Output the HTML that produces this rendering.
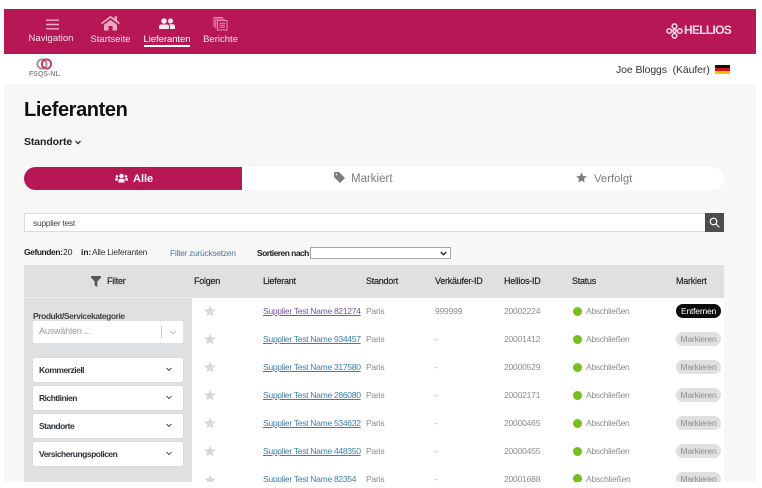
<!DOCTYPE html>
<html><head><meta charset="utf-8">
<style>
*{box-sizing:border-box}
html,body{margin:0;padding:0;background:#fff;width:762px;height:488px;overflow:hidden;font-family:"Liberation Sans",sans-serif}
#p{position:relative;width:762px;height:488px;overflow:hidden;background:#fff}
.a{position:absolute;white-space:nowrap}
.h{font-size:9px;color:#222;top:276px;letter-spacing:-.25px;-webkit-text-stroke:.15px #222}
.g{font-size:8.5px;color:#8c8c8c;letter-spacing:-.2px}
.l{font-size:8.6px;color:#3f7fb0;text-decoration:underline;letter-spacing:-.33px}
.dot{position:absolute;width:9px;height:9px;border-radius:50%;background:#78bd1f;left:573px}
.tag{position:absolute;left:676px;width:45px;height:14px;border-radius:7px;background:#dfe0e2;color:#8c8c8c;font-size:8.5px;letter-spacing:-.2px;text-align:center;line-height:14px}
.box{position:absolute;left:33px;width:150px;height:24px;background:#fff;border-radius:2px;box-shadow:0 0 1px #bbb;font-size:8.5px;font-weight:bold;letter-spacing:-.5px;color:#2e3338;line-height:25px;padding-left:6px}
.nl{font-size:9.5px;color:#f6e3ea;position:absolute;white-space:nowrap;transform:translateX(-50%)}
</style></head><body><div id="p">
<div class="a" style="left:4px;top:84px;width:752px;height:398px;background:#f7f7f7"></div>
<div class="a" style="left:4px;top:9px;width:752px;height:45px;background:#b81755"></div>

<svg class="a" style="left:46px;top:19px" width="13" height="11" viewBox="0 0 13 11"><path d="M0 1.200H13M0 5.500H13M0 9.800H13" stroke="#eba9c2" stroke-width="1.400"/></svg>
<div class="nl" style="left:51px;top:33px">Navigation</div>

<svg class="a" style="left:101px;top:15px" width="19" height="16" viewBox="0 0 19 16"><path fill="#eba9c2" d="M0 8L9.500 .8 13.500 3.600V1.400H16V5.500L19 8 18 9.200 9.500 3 1 9.200ZM3 9.800L9.500 5 16 9.800V15.500H11.500V11H7.500V15.500H3Z"/></svg>
<div class="nl" style="left:110.500px;top:34px">Startseite</div>

<svg class="a" style="left:159px;top:18px" width="16" height="12" viewBox="0 0 16 12"><circle cx="5" cy="3" r="2.800" fill="#fbeaf0"/><circle cx="11.500" cy="3" r="2.500" fill="#fbeaf0"/><path fill="#fbeaf0" d="M0 11V8.500Q0 6.500 2.500 6.500H7.500Q10 6.500 10 8.500V11ZM11 11V8Q11 7 10 6.200H13.500Q16 6.200 16 8.500V11Z"/></svg>
<div class="nl" style="left:167px;top:34px;color:#fff;letter-spacing:-.05px">Lieferanten</div>
<div class="a" style="left:144px;top:45px;width:46px;height:2px;background:#fff"></div>

<svg class="a" style="left:213px;top:16px" width="15" height="15" viewBox="0 0 15 15" fill="none" stroke="#e58fb0" stroke-width="1"><path d="M1 11V1.500H10"/><path d="M2.800 12.500V3H11.500"/><rect x="4.500" y="4.500" width="9.500" height="9.500"/><path d="M6.500 7.300H12M6.500 9.300H12M6.500 11.300H12"/></svg>
<div class="nl" style="left:220.500px;top:34px">Berichte</div>

<svg class="a" style="left:666px;top:23px" width="17" height="16" viewBox="0 0 17 16" fill="none" stroke="#f6dbe5" stroke-width="1.500"><circle cx="8.500" cy="3.200" r="2.300"/><circle cx="8.500" cy="12.800" r="2.300"/><circle cx="3.200" cy="8" r="2.300"/><circle cx="13.800" cy="8" r="2.300"/><circle cx="8.500" cy="8" r="1.600"/></svg>
<div class="a" style="left:684px;top:23px;font-size:12px;font-weight:bold;color:#f6dbe5;letter-spacing:-.7px;line-height:15px">HELLIOS</div>

<svg class="a" style="left:36px;top:58px" width="17" height="13" viewBox="0 0 17 13" fill="none"><circle cx="6" cy="6" r="4.600" stroke="#9a9a9a" stroke-width="2"/><circle cx="10.500" cy="6" r="4.600" stroke="#d23a70" stroke-width="2"/></svg>
<div class="a" style="left:29px;top:71px;font-size:7px;font-weight:bold;color:#8d8d8d;line-height:8px">FSQS-NL</div>

<div class="a" style="left:616px;top:63px;font-size:10.500px;letter-spacing:-.1px;color:#333;line-height:14px">Joe Bloggs&nbsp; (Käufer)</div>
<div class="a" style="left:715px;top:65px;width:15px;height:3px;background:#111"></div>
<div class="a" style="left:715px;top:68px;width:15px;height:3px;background:#d5101c"></div>
<div class="a" style="left:715px;top:71px;width:15px;height:3px;background:#f5c400"></div>

<div class="a" style="left:24px;top:97px;font-size:20px;font-weight:bold;color:#111;line-height:27px;letter-spacing:-.4px">Lieferanten</div>
<div class="a" style="left:24px;top:136px;font-size:10.500px;letter-spacing:-.1px;font-weight:bold;color:#222;line-height:13px">Standorte</div>
<svg class="a" style="left:75px;top:140px" width="6" height="5" viewBox="0 0 6 5"><path d="M.5 1L3 3.600 5.500 1" fill="none" stroke="#222" stroke-width="1.200"/></svg>

<div class="a" style="left:24px;top:167px;width:700px;height:23px;background:#fff;border-radius:12px"></div>
<div class="a" style="left:24px;top:167px;width:218px;height:23px;background:#b81755;border-radius:12px 0 0 12px"></div>
<svg class="a" style="left:115px;top:173px" width="13" height="10" viewBox="0 0 13 10" fill="#fff"><circle cx="6.500" cy="3" r="2.200"/><path d="M3.500 9.500V7.500Q3.500 5.800 5 5.800H8Q9.500 5.800 9.500 7.500V9.500Z"/><circle cx="2" cy="3.300" r="1.300"/><circle cx="11" cy="3.300" r="1.300"/><path d="M0 7.500V6.200Q0 5.200 1 5.200H2.800V7.500ZM13 7.500V6.200Q13 5.200 12 5.200H10.200V7.500Z"/></svg>
<div class="a" style="left:133px;top:173px;font-size:11px;font-weight:bold;color:#fff;line-height:13px">Alle</div>
<svg class="a" style="left:334px;top:172px" width="11" height="11" viewBox="0 0 11 11"><path fill="#7d7d7d" d="M0 1.200Q0 0 1.200 0H5L11 6 6 11 0 5Z"/><circle cx="2.500" cy="2.500" r=".9" fill="#f7f7f7"/></svg>
<div class="a" style="left:351px;top:173px;font-size:11.500px;color:#7d7d7d;line-height:13px">Markiert</div>
<svg class="a" style="left:576px;top:172px" width="11" height="11" viewBox="0 0 24 24"><path fill="#7d7d7d" d="M12 1l3.400 7.400 8 .9-6 5.400 1.700 8L12 18.700 4.900 22.700l1.700-8-6-5.400 8-.9z"/></svg>
<div class="a" style="left:594px;top:173px;font-size:11.300px;color:#7d7d7d;line-height:13px">Verfolgt</div>

<div class="a" style="left:24px;top:213px;width:682px;height:19px;background:#fff;border:1px solid #dcdcdc"></div>
<div class="a" style="left:33px;top:218px;font-size:8.500px;letter-spacing:-.3px;color:#444;line-height:10px">supplier test</div>
<div class="a" style="left:705px;top:213px;width:19px;height:19px;background:#4d4d4d"></div>
<svg class="a" style="left:709px;top:217px" width="11" height="11" viewBox="0 0 11 11" fill="none" stroke="#fff" stroke-width="1.200"><circle cx="4.500" cy="4.500" r="3.300"/><path d="M7 7l3.300 3.300"/></svg>

<div class="a" style="left:24px;top:247px;font-size:8.500px;color:#222;line-height:10px;letter-spacing:-.45px"><b>Gefunden:</b></div>
<div class="a" style="left:63px;top:247px;font-size:8.500px;color:#222;line-height:10px">20</div>
<div class="a" style="left:81px;top:247px;font-size:8.500px;color:#222;line-height:10px"><b>in:</b></div>
<div class="a" style="left:92px;top:247px;font-size:8.500px;color:#333;line-height:10px;letter-spacing:-.25px">Alle Lieferanten</div>
<div class="a" style="left:170px;top:248px;font-size:8.500px;color:#4a7d9e;line-height:10px;letter-spacing:-.3px">Filter zurücksetzen</div>
<div class="a" style="left:257px;top:248px;font-size:8.500px;font-weight:bold;color:#222;line-height:10px;letter-spacing:-.55px">Sortieren nach</div>
<div class="a" style="left:310px;top:247px;width:141px;height:12px;background:#fff;border:1px solid #a5a5a5"></div>
<svg class="a" style="left:440px;top:251px" width="7" height="5" viewBox="0 0 7 5"><path d="M.7 1L3.500 3.700 6.300 1" fill="none" stroke="#222" stroke-width="1.300"/></svg>

<div class="a" style="left:24px;top:265px;width:700px;height:33px;background:#dfe0e2"></div>
<div class="a" style="left:24px;top:298px;width:168px;height:184px;background:#dfe0e2"></div>
<div class="a" style="left:192px;top:298px;width:532px;height:184px;background:#fff"></div>
<div class="a" style="left:24px;top:297px;width:168px;height:1px;background:#ebecee"></div>

<svg class="a" style="left:91px;top:276px" width="10" height="11" viewBox="0 0 10 11"><path fill="#555" d="M0 0H10V1.500L6.300 5.500V11L3.700 9.500V5.500L0 1.500Z"/></svg>
<div class="a h" style="left:107px">Filter</div>
<div class="a h" style="left:194px">Folgen</div>
<div class="a h" style="left:263px">Lieferant</div>
<div class="a h" style="left:366px">Standort</div>
<div class="a h" style="left:435px">Verkäufer-ID</div>
<div class="a h" style="left:504px">Hellios-ID</div>
<div class="a h" style="left:572px">Status</div>
<div class="a h" style="left:676px">Markiert</div>

<div class="a" style="left:33px;top:311px;font-size:8.500px;font-weight:bold;color:#444;line-height:10px;letter-spacing:-.45px">Produkt/Servicekategorie</div>
<div class="a" style="left:33px;top:321px;width:150px;height:22px;background:#fff;border-radius:2px"></div>
<div class="a" style="left:39px;top:326px;font-size:9px;letter-spacing:-.15px;color:#999;line-height:11px">Auswählen ...</div>
<div class="a" style="left:161px;top:326px;width:1px;height:12px;background:#ccc"></div>
<svg class="a" style="left:169px;top:330px" width="8" height="5" viewBox="0 0 8 5"><path d="M1 1L4 3.800 7 1" fill="none" stroke="#bbb" stroke-width="1"/></svg>

<div class="box" style="top:358px">Kommerziell</div>
<div class="box" style="top:386px">Richtlinien</div>
<div class="box" style="top:414px">Standorte</div>
<div class="box" style="top:442px">Versicherungspolicen</div>
<svg class="a" style="left:165px;top:367px" width="8" height="5" viewBox="0 0 8 5"><path d="M1.500 1L4 3.500 6.500 1" fill="none" stroke="#555" stroke-width="1"/></svg>
<svg class="a" style="left:165px;top:395px" width="8" height="5" viewBox="0 0 8 5"><path d="M1.500 1L4 3.500 6.500 1" fill="none" stroke="#555" stroke-width="1"/></svg>
<svg class="a" style="left:165px;top:423px" width="8" height="5" viewBox="0 0 8 5"><path d="M1.500 1L4 3.500 6.500 1" fill="none" stroke="#555" stroke-width="1"/></svg>
<svg class="a" style="left:165px;top:451px" width="8" height="5" viewBox="0 0 8 5"><path d="M1.500 1L4 3.500 6.500 1" fill="none" stroke="#555" stroke-width="1"/></svg>

<svg class="a" style="left:204px;top:305px" width="12" height="12" viewBox="0 0 24 24"><path fill="#d9d9d9" d="M12 1l3.400 7.400 8 .9-6 5.400 1.700 8L12 18.700 4.900 22.700l1.700-8-6-5.400 8-.9z"/></svg>
<svg class="a" style="left:204px;top:333px" width="12" height="12" viewBox="0 0 24 24"><path fill="#d9d9d9" d="M12 1l3.400 7.400 8 .9-6 5.400 1.700 8L12 18.700 4.900 22.700l1.700-8-6-5.400 8-.9z"/></svg>
<svg class="a" style="left:204px;top:361px" width="12" height="12" viewBox="0 0 24 24"><path fill="#d9d9d9" d="M12 1l3.400 7.400 8 .9-6 5.400 1.700 8L12 18.700 4.900 22.700l1.700-8-6-5.400 8-.9z"/></svg>
<svg class="a" style="left:204px;top:389px" width="12" height="12" viewBox="0 0 24 24"><path fill="#d9d9d9" d="M12 1l3.400 7.400 8 .9-6 5.400 1.700 8L12 18.700 4.900 22.700l1.700-8-6-5.400 8-.9z"/></svg>
<svg class="a" style="left:204px;top:417px" width="12" height="12" viewBox="0 0 24 24"><path fill="#d9d9d9" d="M12 1l3.400 7.400 8 .9-6 5.400 1.700 8L12 18.700 4.900 22.700l1.700-8-6-5.400 8-.9z"/></svg>
<svg class="a" style="left:204px;top:445px" width="12" height="12" viewBox="0 0 24 24"><path fill="#d9d9d9" d="M12 1l3.400 7.400 8 .9-6 5.400 1.700 8L12 18.700 4.900 22.700l1.700-8-6-5.400 8-.9z"/></svg>
<svg class="a" style="left:204px;top:474px" width="12" height="8" viewBox="0 0 24 16"><path fill="#d9d9d9" d="M12 1l3.400 7.400 8 .9-6 5.400 1 1.300H5.600l1-1.300-6-5.400 8-.9z"/></svg>

<div class="a l" style="left:263px;top:306px;color:#7b55a5">Supplier Test Name 821274</div>
<div class="a l" style="left:263px;top:334px">Supplier Test Name 934457</div>
<div class="a l" style="left:263px;top:362px">Supplier Test Name 317580</div>
<div class="a l" style="left:263px;top:390px">Supplier Test Name 286080</div>
<div class="a l" style="left:263px;top:418px">Supplier Test Name 534632</div>
<div class="a l" style="left:263px;top:446px">Supplier Test Name 448350</div>
<div class="a" style="left:0;top:0;width:762px;height:482px;overflow:hidden">
<div class="a l" style="left:263px;top:474px">Supplier Test Name 82354</div>
<div class="a g" style="left:366px;top:474px">Paris</div>
<div class="a g" style="left:435px;top:474px">-</div>
<div class="a g" style="left:504px;top:474px">20001688</div>
<div class="dot" style="top:474px"></div>
<div class="a g" style="left:586px;top:474px">Abschließen</div>
<div class="tag" style="top:472px">Markieren</div>
</div>

<div class="a g" style="left:366px;top:306px">Paris</div>
<div class="a g" style="left:366px;top:334px">Paris</div>
<div class="a g" style="left:366px;top:362px">Paris</div>
<div class="a g" style="left:366px;top:390px">Paris</div>
<div class="a g" style="left:366px;top:418px">Paris</div>
<div class="a g" style="left:366px;top:446px">Paris</div>

<div class="a g" style="left:435px;top:306px">999999</div>
<div class="a g" style="left:435px;top:334px">-</div>
<div class="a g" style="left:435px;top:362px">-</div>
<div class="a g" style="left:435px;top:390px">-</div>
<div class="a g" style="left:435px;top:418px">-</div>
<div class="a g" style="left:435px;top:446px">-</div>

<div class="a g" style="left:504px;top:306px">20002224</div>
<div class="a g" style="left:504px;top:334px">20001412</div>
<div class="a g" style="left:504px;top:362px">20000529</div>
<div class="a g" style="left:504px;top:390px">20002171</div>
<div class="a g" style="left:504px;top:418px">20000465</div>
<div class="a g" style="left:504px;top:446px">20000455</div>

<div class="dot" style="top:307px"></div><div class="a g" style="left:586px;top:306px;letter-spacing:-.3px">Abschließen</div>
<div class="dot" style="top:335px"></div><div class="a g" style="left:586px;top:334px;letter-spacing:-.3px">Abschließen</div>
<div class="dot" style="top:363px"></div><div class="a g" style="left:586px;top:362px;letter-spacing:-.3px">Abschließen</div>
<div class="dot" style="top:391px"></div><div class="a g" style="left:586px;top:390px;letter-spacing:-.3px">Abschließen</div>
<div class="dot" style="top:419px"></div><div class="a g" style="left:586px;top:418px;letter-spacing:-.3px">Abschließen</div>
<div class="dot" style="top:447px"></div><div class="a g" style="left:586px;top:446px;letter-spacing:-.3px">Abschließen</div>

<div class="tag" style="top:304px;background:#0b0b0b;color:#fff">Entfernen</div>
<div class="tag" style="top:332px">Markieren</div>
<div class="tag" style="top:360px">Markieren</div>
<div class="tag" style="top:388px">Markieren</div>
<div class="tag" style="top:416px">Markieren</div>
<div class="tag" style="top:444px">Markieren</div>
</div></body></html>
